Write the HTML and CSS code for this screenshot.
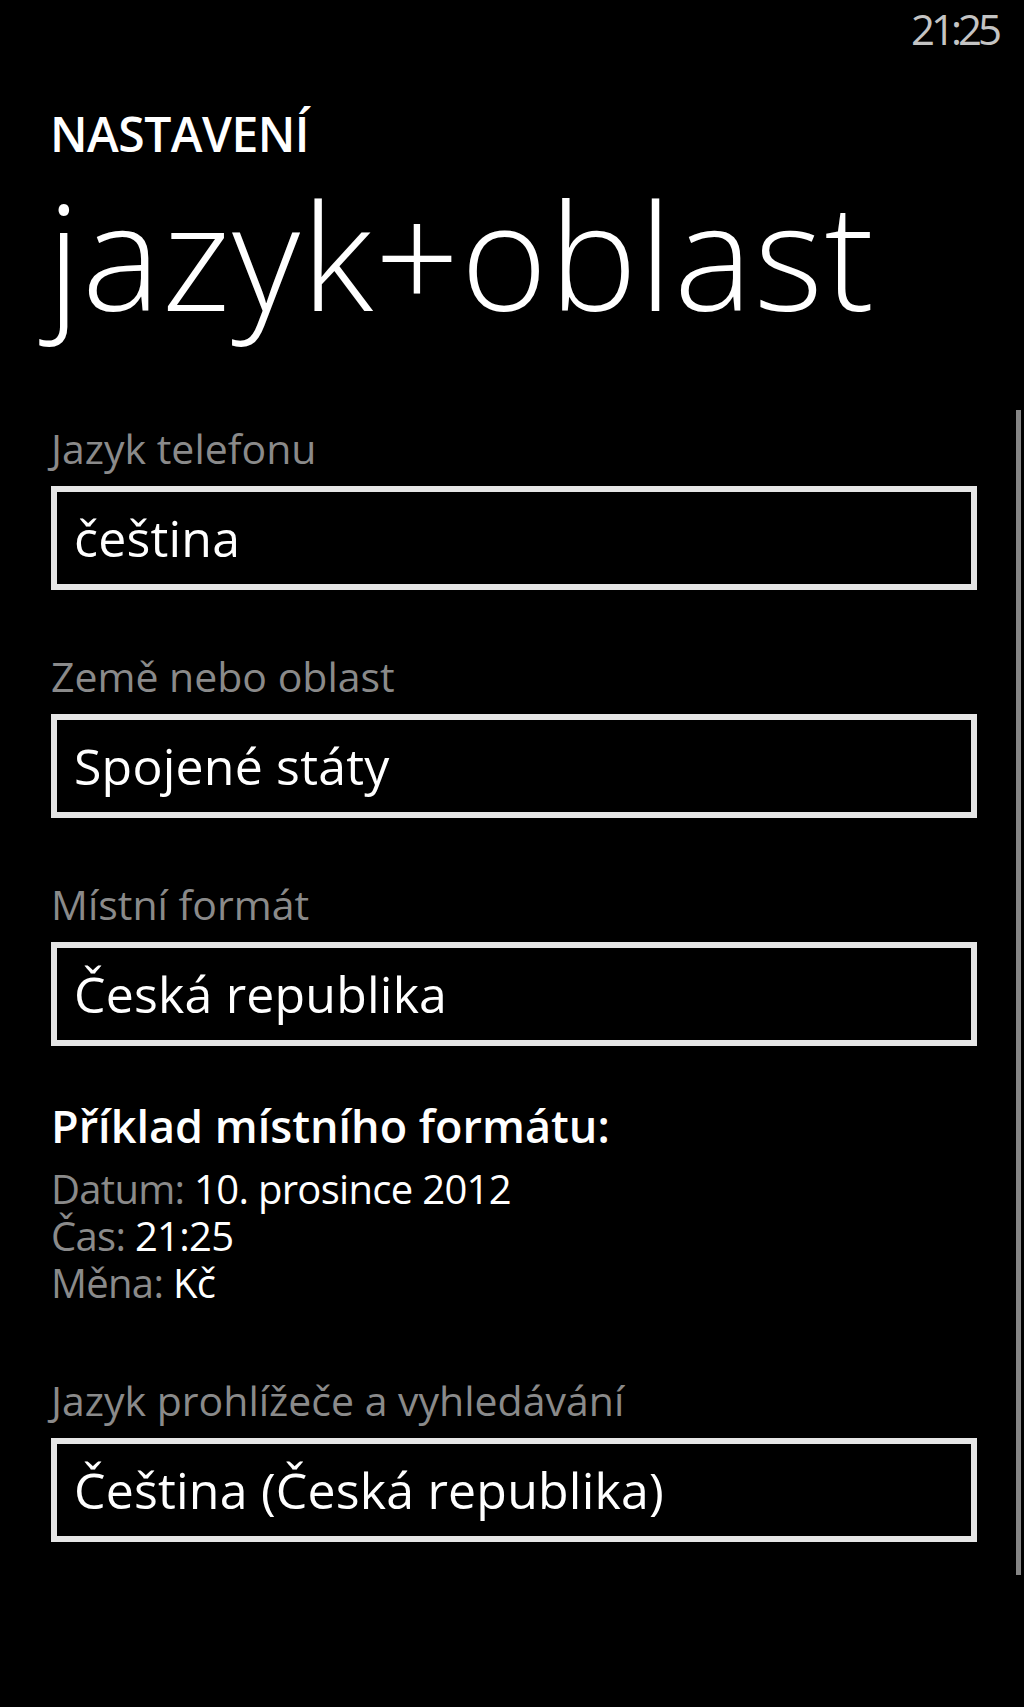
FILE: index.html
```html
<!DOCTYPE html>
<html lang="cs">
<head>
<meta charset="utf-8">
<title>jazyk+oblast</title>
<link rel="stylesheet" href="styles.css">
</head>
<body>
<div class="phone">
  <div class="status-bar"><span class="clock">21:25</span></div>
  <header class="page-header">
    <div class="app-title">NASTAVENÍ</div>
    <h1 class="page-title">jazyk+oblast</h1>
  </header>
  <main class="settings">
    <section class="field">
      <div class="field-label">Jazyk telefonu</div>
      <div class="picker">čeština</div>
    </section>
    <section class="field">
      <div class="field-label">Země nebo oblast</div>
      <div class="picker">Spojené státy</div>
    </section>
    <section class="field">
      <div class="field-label">Místní formát</div>
      <div class="picker">Česká republika</div>
    </section>
    <section class="sample">
      <div class="sample-title">Příklad místního formátu:</div>
      <div class="sample-line"><span class="muted">Datum:</span> 10. prosince 2012</div>
      <div class="sample-line"><span class="muted">Čas:</span> 21:25</div>
      <div class="sample-line"><span class="muted">Měna:</span> Kč</div>
    </section>
    <section class="field">
      <div class="field-label">Jazyk prohlížeče a vyhledávání</div>
      <div class="picker">Čeština (Česká republika)</div>
    </section>
  </main>
  <div class="scroll-indicator"></div>
</div>
</body>
</html>
```

FILE: styles.css
```css
html, body {
  margin: 0;
  padding: 0;
  background: #000;
}

body {
  font-family: "Open Sans", "Noto Sans", "DejaVu Sans", sans-serif;
  color: #fff;
}

.phone {
  position: relative;
  width: 1024px;
  height: 1707px;
  overflow: hidden;
  background: #000;
}

.status-bar {
  display: flex;
  justify-content: flex-end;
  height: 62px;
  padding: 5px 26px 0 0;
  box-sizing: border-box;
}

.clock {
  font-size: 42px;
  line-height: 48px;
  letter-spacing: -4px;
  color: #c4c4c4;
}

.page-header {
  padding-left: 50px;
}

.app-title {
  margin-top: 44px;
  font-size: 48px;
  line-height: 56px;
  font-weight: 600;
  letter-spacing: -0.5px;
}

.page-title {
  margin: 14px 0 0 -3px;
  font-size: 148px;
  line-height: 156px;
  font-weight: 300;
  letter-spacing: 1.6px;
}

.settings {
  display: flex;
  flex-direction: column;
  padding: 92px 0 0 51px;
  width: 926px;
}

.field {
  display: flex;
  flex-direction: column;
  gap: 14px;
  margin-bottom: 62px;
}

.field-label {
  font-size: 41px;
  line-height: 48px;
  color: #8a8a8a;
}

.picker {
  height: 92px;
  border: 6px solid #e6e6e6;
  padding-left: 17px;
  font-size: 50px;
  line-height: 92px;
  letter-spacing: 0.2px;
  color: #fff;
}

.sample {
  display: flex;
  flex-direction: column;
  margin-top: -6px;
  margin-bottom: 70px;
}

.sample-title {
  font-size: 45px;
  line-height: 48px;
  font-weight: 600;
  margin-bottom: 15px;
}

.sample-line {
  font-size: 40px;
  line-height: 47px;
  letter-spacing: -0.7px;
}

.muted {
  color: #8a8a8a;
}

.scroll-indicator {
  position: absolute;
  left: 1016px;
  top: 410px;
  width: 5px;
  height: 1165px;
  background: #858585;
}
```
